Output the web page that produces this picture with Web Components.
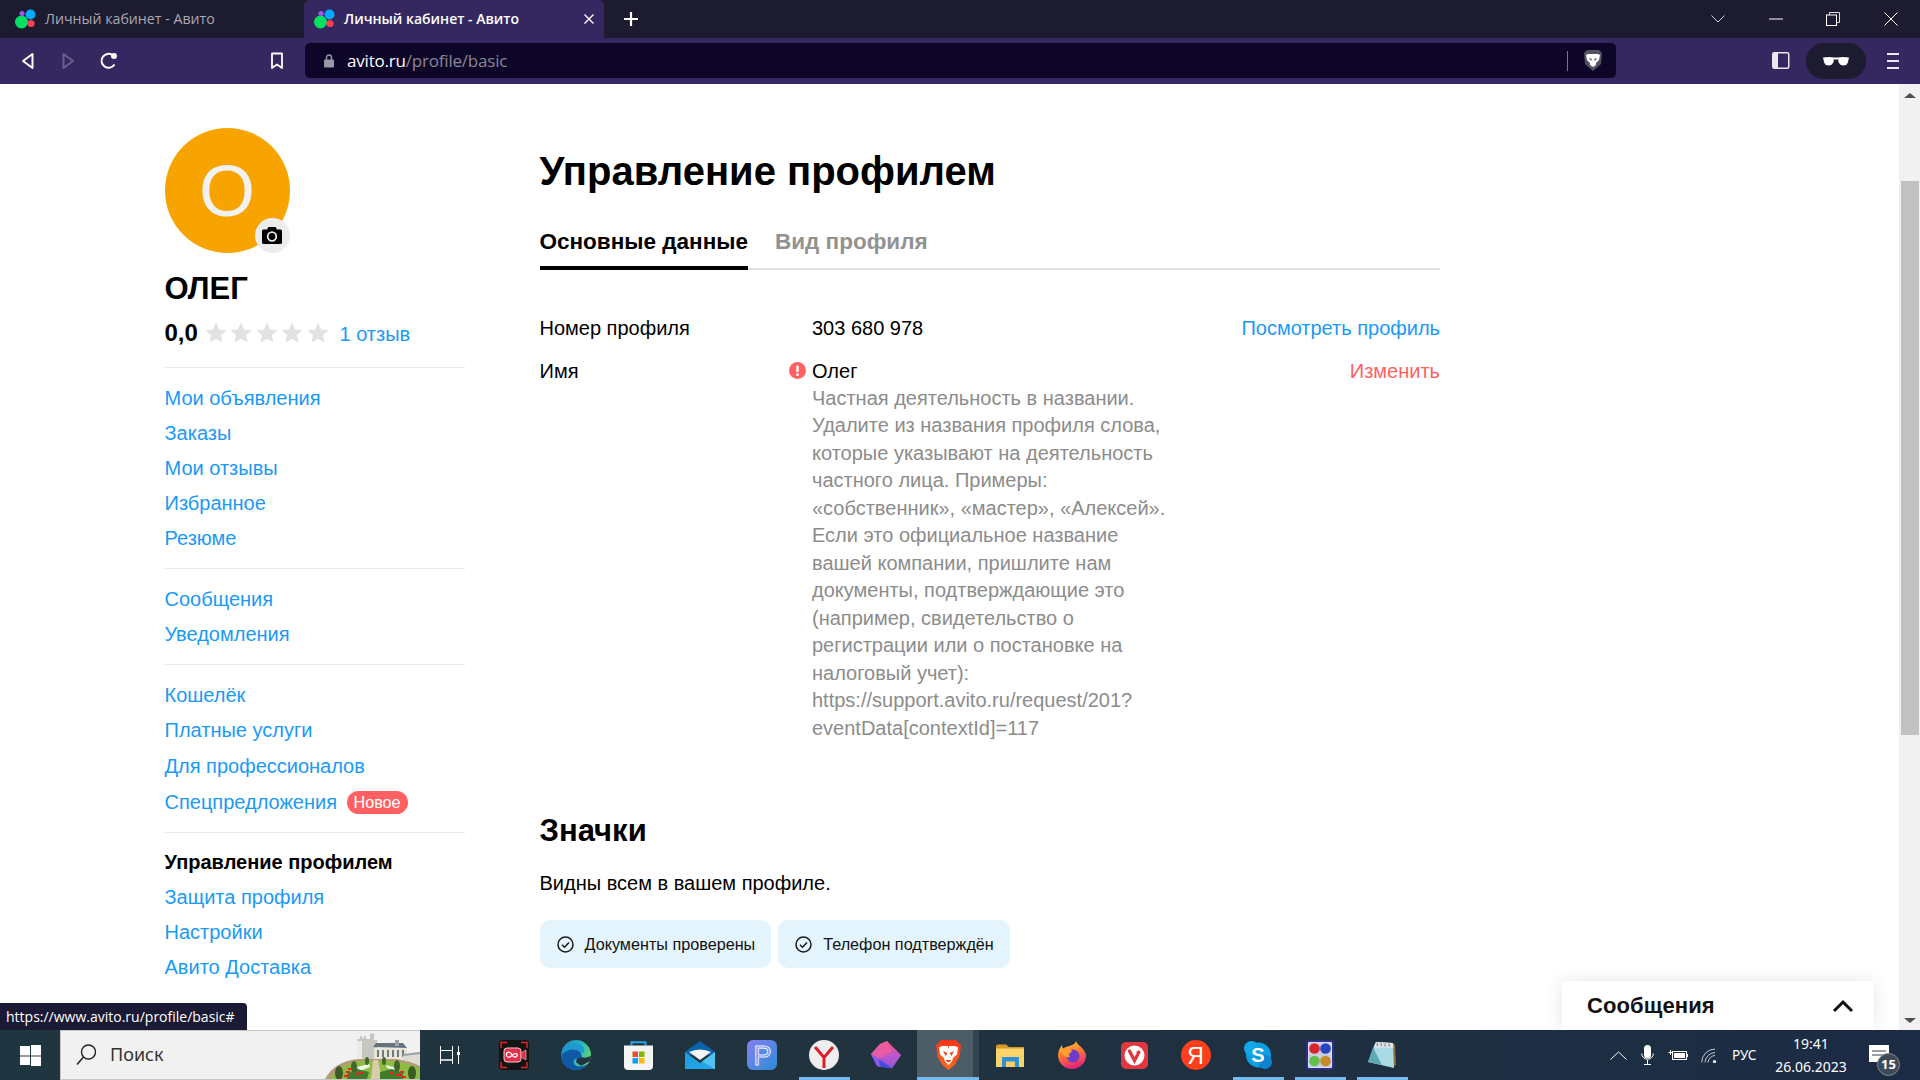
<!DOCTYPE html>
<html lang="ru">
<head>
<meta charset="utf-8">
<title>Личный кабинет - Авито</title>
<style>
  html,body{margin:0;height:100%;overflow:hidden;background:#fff;}
  body{display:flex;flex-direction:column;height:1080px;font-family:"Liberation Sans",Arial,sans-serif;}
</style>
</head>
<body>
<browser-tabs>
  <browser-tab label="Личный кабинет - Авито"></browser-tab>
  <browser-tab label="Личный кабинет - Авито" active></browser-tab>
</browser-tabs>
<browser-toolbar url-host="avito.ru" url-path="/profile/basic"></browser-toolbar>

<page-view>
  <profile-side>
    <side-group>
      <side-link>Мои объявления</side-link>
      <side-link>Заказы</side-link>
      <side-link>Мои отзывы</side-link>
      <side-link>Избранное</side-link>
      <side-link>Резюме</side-link>
    </side-group>
    <side-group>
      <side-link>Сообщения</side-link>
      <side-link>Уведомления</side-link>
    </side-group>
    <side-group style="--row:35.6px;padding-bottom:11.7px">
      <side-link>Кошелёк</side-link>
      <side-link>Платные услуги</side-link>
      <side-link>Для профессионалов</side-link>
      <side-link badge="Новое">Спецпредложения</side-link>
    </side-group>
    <side-group>
      <side-link current>Управление профилем</side-link>
      <side-link>Защита профиля</side-link>
      <side-link>Настройки</side-link>
      <side-link>Авито Доставка</side-link>
    </side-group>
  </profile-side>
  <profile-main></profile-main>
</page-view>

<win-taskbar></win-taskbar>

<script>
const LOGO = `<svg width="22" height="20" viewBox="0 0 22 20"><circle cx="6.5" cy="13" r="6.5" fill="#04e061"/><circle cx="15.5" cy="5.5" r="5" fill="#0af"/><circle cx="16" cy="14.5" r="3.6" fill="#ff4053"/><circle cx="7" cy="4.5" r="2.5" fill="#965eeb"/></svg>`;

class BrowserTabs extends HTMLElement{
  constructor(){
    super();
    this.attachShadow({mode:'open'});
    this.shadowRoot.innerHTML = `
      <style>
        :host{display:flex;height:38px;background:#1c1b30;flex:none;align-items:stretch;}
        .plus{margin-left:16px;width:22px;display:flex;align-items:center;justify-content:center;}
        .win{margin-left:auto;display:flex;align-items:center;}
        .win span{width:57.5px;display:flex;justify-content:center;align-items:center;}
      </style>
      <slot></slot>
      <div class="plus"><svg width="18" height="18" viewBox="0 0 18 18"><path d="M9 2v14M2 9h14" stroke="#fff" stroke-width="2.2"/></svg></div>
      <div class="win">
        <span><svg width="14" height="8" viewBox="0 0 14 8"><path d="M.5.5 7 7 13.5.5" stroke="#cfcfd6" fill="none"/></svg></span>
        <span><svg width="14" height="2" viewBox="0 0 14 2"><path d="M0 1h14" stroke="#fff"/></svg></span>
        <span><svg width="14" height="14" viewBox="0 0 14 14"><path d="M3.5 3V.5h10v10H11" stroke="#ddd" fill="none"/><rect x=".5" y="3" width="10" height="10.5" stroke="#fff" fill="none"/></svg></span>
        <span style="width:58px"><svg width="14" height="14" viewBox="0 0 14 14"><path d="M.5.5l13 13M13.5.5l-13 13" stroke="#fff"/></svg></span>
      </div>`;
  }
}
customElements.define('browser-tabs', BrowserTabs);

class BrowserTab extends HTMLElement{
  connectedCallback(){
    const active = this.hasAttribute('active');
    this.attachShadow({mode:'open'});
    this.shadowRoot.innerHTML = `
      <style>
        :host{display:flex;align-items:center;width:304px;box-sizing:border-box;padding-left:15px;
          font:14.2px "Open Sans","Noto Sans",sans-serif;color:#a9a9b4;}
        :host([active]){width:300px;background:#35275f;border-radius:6px 6px 0 0;color:#fff;font-size:14px;font-weight:600;padding-left:10px;}
        .t{margin-left:8px;flex:1;white-space:nowrap;margin-top:-2px;}
        .x{margin-right:10px;display:flex;}
      </style>
      ${LOGO}<span class="t">${this.getAttribute('label')}</span>
      ${active ? `<span class="x"><svg width="10" height="10" viewBox="0 0 10 10"><path d="M.5.5l9 9M9.5.5l-9 9" stroke="#fff" stroke-width="1.4"/></svg></span>` : ''}`;
  }
}
customElements.define('browser-tab', BrowserTab);

class BrowserToolbar extends HTMLElement{
  connectedCallback(){
    this.attachShadow({mode:'open'});
    this.shadowRoot.innerHTML = `
      <style>
        :host{display:flex;align-items:center;height:46px;background:#35275f;flex:none;padding-left:21px;box-sizing:border-box;}
        svg{display:block;flex:none;}
        .addr{margin-left:21px;width:1311px;height:35px;margin-top:-1px;background:#0d0628;border-radius:5px;display:flex;align-items:center;
          box-sizing:border-box;padding-left:18px;font:17px "Open Sans","Noto Sans",sans-serif;letter-spacing:-.2px;}
        .host{color:#fff;margin-left:12px;}
        .path{color:#8b8797;}
        .sep{margin-left:auto;width:1px;height:20px;background:#77738a;}
        .lion{margin:0 13px 0 15.5px;}
        .pill{width:60px;height:36px;border-radius:18px;background:#1c1b30;display:flex;align-items:center;justify-content:center;margin-left:16px;}
      </style>
      <svg width="14" height="18" viewBox="0 0 14 18"><path d="M11.5 2v14L2 9z" fill="none" stroke="#fff" stroke-width="2" stroke-linejoin="round"/></svg>
      <svg style="margin-left:26px" width="14" height="18" viewBox="0 0 14 18"><path d="M2.5 2v14L12 9z" fill="none" stroke="#6a5f8c" stroke-width="2" stroke-linejoin="round"/></svg>
      <svg style="margin-left:25px" width="18" height="18" viewBox="0 0 18 18"><path d="M14.5 12.5A7 7 0 1 1 12.5 3" fill="none" stroke="#fff" stroke-width="2"/><circle cx="14" cy="4" r="3" fill="#fff"/></svg>
      <svg style="margin-left:152px" width="14" height="18" viewBox="0 0 14 18"><path d="M2 1.5h10V16l-5-3.5L2 16z" fill="none" stroke="#fff" stroke-width="1.8" stroke-linejoin="round"/></svg>
      <div class="addr">
        <svg width="12" height="14" viewBox="0 0 12 14"><rect x="1" y="5.5" width="10" height="8" rx="1" fill="#9a97a6"/><path d="M3.5 6V3.5a2.5 2.5 0 0 1 5 0V6" fill="none" stroke="#9a97a6" stroke-width="1.4"/></svg>
        <span class="host">${this.getAttribute('url-host')}</span><span class="path">${this.getAttribute('url-path')}</span>
        <span class="sep"></span>
        <svg class="lion" width="20" height="23" viewBox="0 0 20 23"><path d="M4 1h12l3 3-1 11-8 7-8-7L1 4z" fill="#55535f"/><path d="M5 5h10l2 1-1 5-3 3v2l-3 2-3-2v-2l-3-3-1-5z" fill="#fff"/><path d="M6 9l3 1-1 2zM14 9l-3 1 1 2z" fill="#55535f"/></svg>
      </div>
      <svg style="margin-left:156px" width="18" height="18" viewBox="0 0 18 18"><rect x=".75" y=".75" width="16" height="15.5" rx="1.5" fill="none" stroke="#e8e8ee" stroke-width="1.5"/><rect x="1" y="1" width="5" height="15" fill="#e8e8ee"/></svg>
      <div class="pill"><svg width="26" height="10" viewBox="0 0 26 10"><path d="M0 1.500Q6 .5 11 1.500L10.500 6Q9 9.500 5.500 9.500 2 9.500 1 6zM26 1.500Q20 .5 15 1.500L15.500 6Q17 9.500 20.500 9.500 24 9.500 25 6zM11 1.500h4v2h-4z" fill="#fff"/></svg></div>
      <svg style="margin-left:21px" width="12" height="16" viewBox="0 0 12 16"><path d="M0 1h12M0 8h12M0 15h12" stroke="#e8e8ee" stroke-width="2"/></svg>`;
  }
}
customElements.define('browser-toolbar', BrowserToolbar);

class PageView extends HTMLElement{
  constructor(){
    super();
    this.attachShadow({mode:'open'});
    this.shadowRoot.innerHTML = `
      <style>
        :host{display:flex;flex:1;min-height:0;position:relative;background:#fff;overflow:hidden;}
        .content{flex:1;display:grid;grid-template-columns:300px 900.5px;column-gap:75px;padding:0 0 0 164.5px;align-content:start;}
        .scroll{width:21px;flex:none;background:#f1f1f1;display:flex;flex-direction:column;align-items:center;justify-content:space-between;padding:9px 0 7px 1px;box-sizing:border-box;position:relative;}
        .thumb{position:absolute;left:2px;right:1px;top:97px;height:554px;background:#c1c1c1;}
        .arr{width:0;height:0;border:5px solid transparent;border-left-width:6px;border-right-width:6px;}
        .up{border-top:0;border-bottom:5px solid #505050;}
        .down{border-bottom:0;border-top:5px solid #505050;}
        .status{position:absolute;left:0;bottom:0;width:247px;height:27px;box-sizing:border-box;background:#1b1a35;border-radius:0 4px 0 0;color:#fff;
          font:14px "Open Sans","Noto Sans",sans-serif;line-height:27px;padding-left:6px;white-space:nowrap;}
        .msgs{position:absolute;left:1562px;bottom:0;width:312px;height:49px;background:#fff;border-radius:4px 4px 0 0;box-shadow:0 0 18px rgba(0,0,0,.1);
          display:flex;align-items:center;justify-content:space-between;box-sizing:border-box;padding:0 20px 0 25px;
          font-family:"Liberation Sans",sans-serif;font-size:22px;font-weight:700;color:#111;letter-spacing:.1px;}
      </style>
      <div class="content"><slot></slot></div>
      <div class="scroll"><span class="arr up"></span><span class="thumb"></span><span class="arr down"></span></div>
      <div class="status">https://www.avito.ru/profile/basic#</div>
      <div class="msgs">Сообщения<svg width="22" height="14" viewBox="0 0 22 14"><path d="M2 12 11 3l9 9" fill="none" stroke="#111" stroke-width="3"/></svg></div>`;
  }
}
customElements.define('page-view', PageView);

class ProfileSide extends HTMLElement{
  constructor(){
    super();
    this.attachShadow({mode:'open'});
    const star = `<svg width="24" height="24" viewBox="0 0 24 24"><path d="M12 1.500l3.100 7 7.400.7-5.600 5 1.700 7.400L12 17.700l-6.600 3.900 1.700-7.400-5.600-5 7.400-.7z" fill="#e2e2e2"/></svg>`;
    this.shadowRoot.innerHTML = `
      <style>
        :host{display:block;padding-top:44px;}
        .ava{position:relative;width:125px;height:125px;border-radius:50%;background:#f7a400;color:#f1f1f1;display:flex;align-items:center;justify-content:center;
          font-size:72px;line-height:1;}
        .cam{position:absolute;right:0;bottom:0;width:35px;height:35px;border-radius:50%;background:#ececec;display:flex;align-items:center;justify-content:center;}
        .cam svg{margin-top:-2px;}
        .name{margin-top:18px;font-size:31px;line-height:36px;font-weight:700;color:#000;}
        .rate{margin-top:11px;margin-bottom:19px;display:flex;align-items:center;height:30px;}
        .rate b{font-size:24px;color:#000;width:39px;}
        .stars{display:flex;gap:1.500px;width:136px;}
        .rate a{font-size:20px;color:#1a9af5;margin-top:2px;}
      </style>
      <div class="ava">О<span class="cam"><svg width="20" height="18" viewBox="0 0 20 18"><path d="M6.500 1h7l1.500 2.500h3.500A1.500 1.500 0 0 1 20 5v11.500a1.500 1.500 0 0 1-1.500 1.500h-17A1.500 1.500 0 0 1 0 16.500V5a1.500 1.500 0 0 1 1.500-1.500H5z" fill="#000"/><circle cx="10" cy="10.500" r="4.300" fill="none" stroke="#ececec" stroke-width="1.800"/></svg></span></div>
      <div class="name">ОЛЕГ</div>
      <div class="rate"><b>0,0</b><span class="stars">${star.repeat(5)}</span><a>1 отзыв</a></div>
      <slot></slot>`;
  }
}
customElements.define('profile-side', ProfileSide);

class SideGroup extends HTMLElement{
  constructor(){
    super();
    this.attachShadow({mode:'open'});
    this.shadowRoot.innerHTML = `
      <style>:host{display:block;border-top:1px solid #e8e8e8;padding:12.5px 0;}</style><slot></slot>`;
  }
}
customElements.define('side-group', SideGroup);

class SideLink extends HTMLElement{
  connectedCallback(){
    this.attachShadow({mode:'open'});
    const badge = this.getAttribute('badge');
    this.shadowRoot.innerHTML = `
      <style>
        :host{display:flex;align-items:center;height:var(--row,35px);font-size:20px;color:#1a9af5;white-space:nowrap;}
        :host([current]){color:#000;font-weight:700;}
        .b{margin-left:9.5px;background:#ff6163;color:#fff;border-radius:12px;height:23px;line-height:23px;padding:0 7px;font-size:16.2px;}
      </style>
      <slot></slot>${badge ? `<span class="b">${badge}</span>` : ''}`;
  }
}
customElements.define('side-link', SideLink);

class InfoRow extends HTMLElement{
  connectedCallback(){
    const warn = this.hasAttribute('warn');
    this.attachShadow({mode:'open'});
    this.shadowRoot.innerHTML = `
      <style>
        :host{display:grid;grid-template-columns:272.5px 1fr auto;font-size:20px;line-height:28px;color:#000;}
        .l{display:flex;justify-content:space-between;align-items:center;height:28px;padding-right:6px;}
        .a{color:${warn ? '#ff6163' : '#1a9af5'};height:28px;}
        .v{line-height:27.5px;padding-top:1px;}
        svg{display:block;}
      </style>
      <div class="l"><span>${this.getAttribute('label')}</span>${warn ? `<svg width="17" height="17" viewBox="0 0 17 17"><circle cx="8.5" cy="8.5" r="8.5" fill="#ff6163"/><path d="M8.5 3.500v6.500" stroke="#fff" stroke-width="2.4"/><circle cx="8.5" cy="12.700" r="1.400" fill="#fff"/></svg>` : ''}</div>
      <div class="v"><slot></slot></div>
      <div class="a">${this.getAttribute('action')}</div>`;
  }
}
customElements.define('info-row', InfoRow);

class BadgeChip extends HTMLElement{
  constructor(){
    super();
    this.attachShadow({mode:'open'});
    this.shadowRoot.innerHTML = `
      <style>
        :host{display:inline-flex;align-items:center;height:48px;box-sizing:border-box;padding:0 16px 0 17px;background:#e3f4fd;border-radius:10px;font-size:16.2px;color:#111;white-space:nowrap;}
        svg{margin-right:11px;display:block;}
      </style>
      <svg width="17" height="17" viewBox="0 0 17 17"><circle cx="8.5" cy="8.5" r="7.5" fill="none" stroke="#1b1b1b" stroke-width="1.5"/><path d="M5 8.700l2.500 2.500L12 6.500" fill="none" stroke="#1b1b1b" stroke-width="1.6"/></svg><slot></slot>`;
  }
}
customElements.define('badge-chip', BadgeChip);

class ProfileMain extends HTMLElement{
  constructor(){
    super();
    this.attachShadow({mode:'open'});
    this.shadowRoot.innerHTML = `
      <style>
        :host{display:block;padding-top:63px;color:#000;}
        h1{margin:0;font-size:40px;line-height:48px;font-weight:700;}
        .tabs{display:flex;gap:27px;margin-top:31px;border-bottom:2px solid #e0e0e0;height:42px;}
        .tab{font-size:22.5px;font-weight:700;line-height:31px;height:40px;color:#929292;}
        .tab.on{color:#000;border-bottom:4px solid #000;box-sizing:content-box;}
        .rows{margin-top:44px;display:flex;flex-direction:column;gap:14px;}
        .desc{color:#8c8c8c;font-size:20px;margin-top:-.5px;}
        h2{margin:69px 0 0;font-size:31px;line-height:40px;font-weight:700;}
        p{margin:17px 0 0;font-size:20px;line-height:30px;}
        .chips{margin-top:22px;display:flex;gap:7px;}
      </style>
      <h1>Управление профилем</h1>
      <div class="tabs"><div class="tab on">Основные данные</div><div class="tab">Вид профиля</div></div>
      <div class="rows">
        <info-row label="Номер профиля" action="Посмотреть профиль">303 680 978</info-row>
        <info-row label="Имя" action="Изменить" warn>Олег
          <div class="desc">Частная деятельность в названии.<br>Удалите из названия профиля слова,<br>которые указывают на деятельность<br>частного лица. Примеры:<br>«собственник», «мастер», «Алексей».<br>Если это официальное название<br>вашей компании, пришлите нам<br>документы, подтверждающие это<br>(например, свидетельство о<br>регистрации или о постановке на<br>налоговый учет):<br>https://support.avito.ru/request/201?<br>eventData[contextId]=117</div>
        </info-row>
      </div>
      <h2>Значки</h2>
      <p>Видны всем в вашем профиле.</p>
      <div class="chips"><badge-chip>Документы проверены</badge-chip><badge-chip>Телефон подтверждён</badge-chip></div>`;
  }
}
customElements.define('profile-main', ProfileMain);

// taskbar icons: [width, height, markup], drawn in real pixels
const ICONS = {
  rec:[30,30,`<rect width="30" height="30" rx="4" fill="#141414"/><path d="M2 8V2.500h6M22 2.500h6V8M28 22v5.500h-6M8 27.500H2V22" stroke="#e8262a" stroke-width="1.4" fill="none"/><rect x="5" y="8" width="17" height="14" rx="3" fill="#e0304a" stroke="#f5c6cc"/><path d="M22 13l5-3v10l-5-3z" fill="#e0304a" stroke="#f5c6cc" stroke-width=".6"/><path d="M8 13c2-2 4 0 5 2s3 3 5 1c1-2-1-3-3-2-2 1-4 4-6 3-2-1-2-3-1-4z" fill="none" stroke="#fff" stroke-width="1.2"/>`],
  edge:[30,30,`<defs><linearGradient id="e1" x1="0" y1=".2" x2="1" y2=".6"><stop offset="0" stop-color="#1b88c9"/><stop offset=".55" stop-color="#2bb4c2"/><stop offset="1" stop-color="#62d86f"/></linearGradient></defs><circle cx="15" cy="15" r="15" fill="url(#e1)"/><path d="M17 15c5 4 9 3 13 .5l-.8 5.500L20 26l-5-4z" fill="#20333f"/><path d="M.2 17C2 9 13 6 19 12c3 4 1 7-2 6.500-3 0-5 1-4 5 1 3 8 5 15-.5-4 6-9 7-13 7C7 30 1 25 .2 17z" fill="#0e5aa6"/><path d="M19 12c-5-4-13-3-17 2C4 6 12 2 18 4c5 2 7 6 4 9z" fill="#1d9bd1"/>`],
  store:[29,29,`<path d="M7.500 4.500V1.200h14v3.300" fill="none" stroke="#2aa5e6" stroke-width="2"/><path d="M0 4.500h29V25a4 4 0 0 1-4 4H4a4 4 0 0 1-4-4z" fill="#f4f4f4"/><rect x="8.500" y="10.500" width="5.500" height="5.500" fill="#e8502a"/><rect x="15" y="10.500" width="5.500" height="5.500" fill="#7fba00"/><rect x="8.500" y="17" width="5.500" height="5.500" fill="#00a4ef"/><rect x="15" y="17" width="5.500" height="5.500" fill="#ffb900"/>`],
  mail:[30,28,`<defs><linearGradient id="m1" x1="0" y1="0" x2="1" y2="1"><stop offset="0" stop-color="#1c9be0"/><stop offset="1" stop-color="#28a8ea"/></linearGradient></defs><path d="M0 11 15 0l15 11v3H0z" fill="#0b63ad"/><path d="M4 11q11-5 22 0L15 19z" fill="#f3f6f8"/><path d="M0 11l15 11 15-11v17H0z" fill="url(#m1)"/><path d="M30 28 17 20.500 30 11z" fill="#50c3f0"/>`],
  p:[30,30,`<defs><linearGradient id="p1" x1="0" y1="0" x2="1" y2="1"><stop offset="0" stop-color="#8480f2"/><stop offset="1" stop-color="#2d8cd6"/></linearGradient></defs><rect width="30" height="30" rx="6" fill="url(#p1)"/><text x="15.500" y="25" text-anchor="middle" font-family="Liberation Sans" font-size="27" fill="none" stroke="#e8edff" stroke-width="1.100">P</text>`],
  ybrowser:[30,30,`<circle cx="15" cy="15" r="15" fill="#f0efef"/><path d="M6 7l9 10.500L24 7M15 17v11" stroke="#dc1f26" stroke-width="3" fill="none"/>`],
  crystal:[30,28,`<defs><linearGradient id="c1" x1=".5" y1="0" x2=".4" y2="1"><stop offset="0" stop-color="#f2587a"/><stop offset=".5" stop-color="#c653cf"/><stop offset="1" stop-color="#5a4fe0"/></linearGradient></defs><path d="M16 0l14 14-9 13.500L6 25 0 13 9 3z" fill="url(#c1)"/><path d="M9 3l7-3 5 11-13 7-8-5z" fill="#ee5f9c" opacity=".8"/><path d="M0 13l8 5 1 8-3-1z" fill="#8a5cf0"/><path d="M8 18l13 9-12-1z" fill="#4a4ae0"/><path d="M21 11l9 3-9 13-13-9z" fill="#b65ccf" opacity=".6"/>`],
  brave:[25,30,`<defs><linearGradient id="b1" x1="0" y1="0" x2="0" y2="1"><stop offset="0" stop-color="#f5331a"/><stop offset="1" stop-color="#ff6a1c"/></linearGradient></defs><path d="M5 0h15l3 3.500 2 2-1.500 11-4.500 8-6.500 5.500-6.500-5.500-4.500-8L0 5.500l2-2z" fill="url(#b1)"/><path d="M6 6h13l3 1.500-1 7-4 3.500-1 3.500-3.500 3.500L9 21.500 8 18l-4-3.500-1-7z" fill="#fff"/><path d="M7 11l4.500 2-2 3zM18 11l-4.500 2 2 3zM11.500 4h2L12.500 9zM10 21l2.500 1.500L15 21v-1h-5z" fill="#f5481c"/>`],
  folder:[28,23,`<path d="M0 2.500A2 2 0 0 1 2 .5h8l3 2.500h15v3H0z" fill="#d99a25"/><path d="M0 4.500h28V23H0z" fill="#fbd469"/><path d="M6 13h17v10H6z" fill="#2f90d8"/><rect x="10" y="17.500" width="9" height="5.500" fill="#f5cf6b"/>`],
  firefox:[28,28,`<defs><linearGradient id="f1" x1=".2" y1="0" x2=".5" y2="1"><stop offset="0" stop-color="#ffce3a"/><stop offset=".45" stop-color="#ff7a2f"/><stop offset="1" stop-color="#e6207e"/></linearGradient></defs><path d="M4 4c0 2 .5 3 1.500 3.500C8 5 11 6 14 4c3-1 3.500-2.500 4-4 1 3 3 4 5.500 6.500 3 3 4.500 6 4.500 8A14 13.500 0 0 1 0 14.500C0 11 1.500 7 4 4z" fill="url(#f1)"/><circle cx="15" cy="15" r="6.500" fill="#6d3dc9"/><path d="M4 9c4-2 9-.5 10.500 2-3 0-4.500 2.500-2.500 5-4 1-8.500-2-8-7z" fill="#ff9f2e"/>`],
  vivaldi:[27,27,`<rect width="27" height="27" rx="5" fill="#e0383e"/><circle cx="13.500" cy="13.500" r="10" fill="#fff"/><path d="M8.500 9l5 9.500 3-5.500" fill="none" stroke="#e0383e" stroke-width="3.400" stroke-linecap="round"/><circle cx="17.500" cy="10.500" r="2" fill="#e0383e"/>`],
  yandex:[30,30,`<circle cx="15" cy="15" r="15" fill="#fc3f1d"/><text x="14.500" y="23.500" text-anchor="middle" font-family="Liberation Sans" font-size="23" fill="#fff">Я</text>`],
  skype:[28,28,`<circle cx="14.500" cy="14" r="12.500" fill="#0b9fe3"/><circle cx="7.500" cy="7.500" r="7.500" fill="#12a7e8"/><circle cx="21" cy="21" r="7" fill="#0a84cf"/><text x="14" y="21" text-anchor="middle" font-family="Liberation Sans" font-weight="700" font-size="20" fill="#fff">S</text>`],
  grid:[28,30,`<rect x="1" y="1" width="26" height="28" rx="2" fill="#dde0ec" stroke="#2b2f8e" stroke-width="2"/><path d="M3 3h22v24H3z" fill="#c9cfe0"/><circle cx="8.500" cy="8.500" r="5.300" fill="#d8252b"/><circle cx="19.500" cy="8.500" r="5.300" fill="#2846c4"/><circle cx="8.500" cy="21" r="5.300" fill="#62c04e"/><circle cx="19.500" cy="21" r="5.300" fill="#c98a2b"/>`],
  notepad:[28,26,`<path d="M9 1 27 2l1 21-4 2z" fill="#8a6f3a"/><path d="M8 0 25 1l1 25L0 20z" fill="#a9dbe4"/><path d="M8 0 25 1l.3 5-20-.5z" fill="#dfe3e6"/><path d="M5 5.500 14 23 0 20z" fill="#5fa8b5"/><path d="M9 1l.5 3M13 1.200l.3 3M17 1.500l.2 3M21 1.700l.2 3" stroke="#6f7478"/>`]
};

class WinTaskbar extends HTMLElement{
  constructor(){
    super();
    this.attachShadow({mode:'open'});
    const pin = (name, extra) => {
      const [w, h, body] = ICONS[name];
      return `<span class="item ${extra||''}"><svg width="${w}" height="${h}" viewBox="0 0 ${w} ${h}">${body}</svg></span>`;
    };
    this.shadowRoot.innerHTML = `
      <style>
        :host{display:flex;align-items:center;height:50px;flex:none;background:linear-gradient(90deg,#1f3540,#20333f 45%,#1c2b44);}
        svg{display:block;flex:none;}
        .start{width:60px;display:flex;justify-content:center;}
        .search{width:360px;height:50px;box-sizing:border-box;border:1px solid #c6c6c6;border-right:0;background:#f1f1f1;display:flex;align-items:center;padding-left:15px;
          font:18px "Noto Sans","Open Sans",sans-serif;color:#333;position:relative;overflow:hidden;}
        .search span{margin-left:14px;margin-top:-2px;}
        .castle{position:absolute;right:0;bottom:0;}
        .view{width:60px;display:flex;justify-content:center;}
        .pins{display:flex;margin-left:3px;}
        .item{width:62px;height:50px;display:flex;align-items:center;justify-content:center;box-sizing:border-box;flex:none;}
        .item.u{background:linear-gradient(#76b9ed,#76b9ed) center bottom/51px 3px no-repeat;}
        .item.act{background:linear-gradient(#76b9ed,#76b9ed) center bottom/100% 3px no-repeat,linear-gradient(90deg,#4c5d67 56px,#33444f 56px);}
        .tray{margin-left:auto;display:flex;align-items:center;color:#fff;font:14px "Noto Sans","Open Sans",sans-serif;height:50px;padding-right:31px;}
        .clock{width:100px;text-align:center;line-height:23px;font-size:14px;margin-left:3px;}
        .lang{font-size:13.5px;margin-left:15px;width:26px;white-space:nowrap;}
        .note{position:relative;width:20px;height:20px;margin-left:8px;}
        .cnt{position:absolute;right:-11px;bottom:-11px;width:23px;height:23px;border-radius:50%;background:#3e4a58;border:1px solid #7f8791;box-sizing:border-box;font-size:13px;font-weight:700;line-height:21px;text-align:center;}
      </style>
      <div class="start"><svg width="21" height="21" viewBox="0 0 21 21"><path d="M0 1h10v9.500H0zM11 0h10v10.500H11zM0 11.500h10V20H0zM11 11.500h10V21H11z" fill="#fff"/></svg></div>
      <div class="search">
        <svg width="20" height="22" viewBox="0 0 20 22"><circle cx="12.5" cy="8" r="7" fill="none" stroke="#222" stroke-width="1.4"/><path d="M7.500 13 1 20.500" stroke="#222" stroke-width="1.5"/></svg>
        <span>Поиск</span>
        <svg class="castle" width="95" height="48" viewBox="15 1 95 48">
          <path d="M47 9h3V6h2v2h2V6h2v3h4V4l2-1 2 1v6h3v20H47z" fill="#c5c7c0"/>
          <path d="M47 11h5v19h-5z" fill="#ecebe4"/>
          <path d="M63 17l3-4h27l4 5z" fill="#66717e"/>
          <path d="M85 10h4v6h-4z" fill="#9da3a6"/>
          <path d="M64 18h33v13H64z" fill="#e9e6d8"/>
          <path d="M67 20h2v7h-2zM72 20h2v7h-2zM77 20h2v7h-2zM82 20h2v7h-2zM87 20h2v7h-2zM92 20h2v7h-2z" fill="#6f7980"/>
          <path d="M93 24h17v11H93z" fill="#dcdcd3"/><path d="M93 24l17-2v2l-17 2z" fill="#9aa0a2"/>
          <path d="M15 49q10-18 33-20h38q14 2 24 7v13z" fill="#b39a78"/>
          <path d="M20 49q10-15 30-18h34q14 2 26 7v11z" fill="#8dbb44"/>
          <path d="M61 49l2-19h5l4 19z" fill="#d8cdaa"/>
          <path d="M47 37l12-3 1 3-10 4zM76 35l11 3v3l-10-3z" fill="#f0f3ea"/>
          <path d="M37 44l10-5 12 3-2 7H37zM70 42l12-3 11 4v6H70z" fill="#3f7d2d"/>
          <ellipse cx="29" cy="43" rx="4" ry="7" fill="#3b5c22"/><ellipse cx="44" cy="37" rx="3" ry="6" fill="#40682a"/>
          <ellipse cx="57" cy="31" rx="2" ry="4" fill="#40682a"/><ellipse cx="74" cy="31" rx="2" ry="4" fill="#40682a"/>
          <ellipse cx="87" cy="36" rx="3" ry="6" fill="#40682a"/><ellipse cx="102" cy="43" rx="4" ry="7" fill="#3b5c22"/>
          <path d="M34 45h5v2h-5zM36 41h4v2h-4zM38 38h3v2h-3zM45 43h5v2h-5zM50 42h3v2h-3zM79 42h5v2h-5zM86 44h5v2h-5zM90 41h4v2h-4zM92 46h4v2h-4z" fill="#e8261f"/>
        </svg>
      </div>
      <div class="view"><svg width="20" height="18" viewBox="0 0 20 18"><path d="M.5 0v4.500h12V0M.5 18v-4h12v4M18.500 0v18" stroke="#fff" fill="none"/><rect x=".5" y="4.500" width="12" height="9.500" fill="none" stroke="#fff"/><rect x="17" y="6" width="3" height="3" fill="#fff"/></svg></div>
      <div class="pins">
        ${pin('rec')}${pin('edge')}${pin('store')}${pin('mail')}${pin('p')}${pin('ybrowser','u')}${pin('crystal')}${pin('brave','act')}
        ${pin('folder')}${pin('firefox')}${pin('vivaldi')}${pin('yandex')}${pin('skype','u')}${pin('grid','u')}${pin('notepad','u')}
      </div>
      <div class="tray">
        <svg width="17" height="9" viewBox="0 0 17 9"><path d="M.5 8.500 8.500 1l8 7.500" fill="none" stroke="#fff"/></svg>
        <svg style="margin-left:14px" width="13" height="20" viewBox="0 0 13 20"><rect x="3" y="0" width="7" height="13.500" rx="3.500" fill="#fff"/><path d="M.7 8.500a5.800 5.800 0 0 0 11.600 0M6.500 15v4M3 19.500h7" stroke="#fff" fill="none"/></svg>
        <svg style="margin-left:14px" width="20" height="12" viewBox="0 0 20 12"><rect x="4.500" y="2.500" width="14" height="8" fill="none" stroke="#fff"/><rect x="6" y="4" width="11" height="5" fill="#fff"/><path d="M.5 3.500h4M2.500 1v5" stroke="#fff"/><rect x="19" y="5" width="1" height="3" fill="#fff"/></svg>
        <svg style="margin-left:13px" width="16" height="15" viewBox="0 0 16 15"><path d="M.7 14.500A13.500 13.500 0 0 1 14 1M4 14.500A10.500 10.500 0 0 1 14 4.500M7 14.500A7.500 7.500 0 0 1 14 7.500" fill="none" stroke="#d5d8dc" stroke-width=".9"/><circle cx="13.5" cy="13.5" r="1.600" fill="#fff"/></svg>
        <span class="lang">РУС</span>
        <div class="clock">19:41<br>26.06.2023</div>
        <div class="note"><svg width="20" height="17" viewBox="0 0 20 17"><path d="M0 0h20v17H0z" fill="#fff"/><path d="M3 6h14M3 10h14" stroke="#33404f"/></svg><span class="cnt">15</span></div>
      </div>`;
  }
}
customElements.define('win-taskbar', WinTaskbar);
</script>
</body>
</html>
